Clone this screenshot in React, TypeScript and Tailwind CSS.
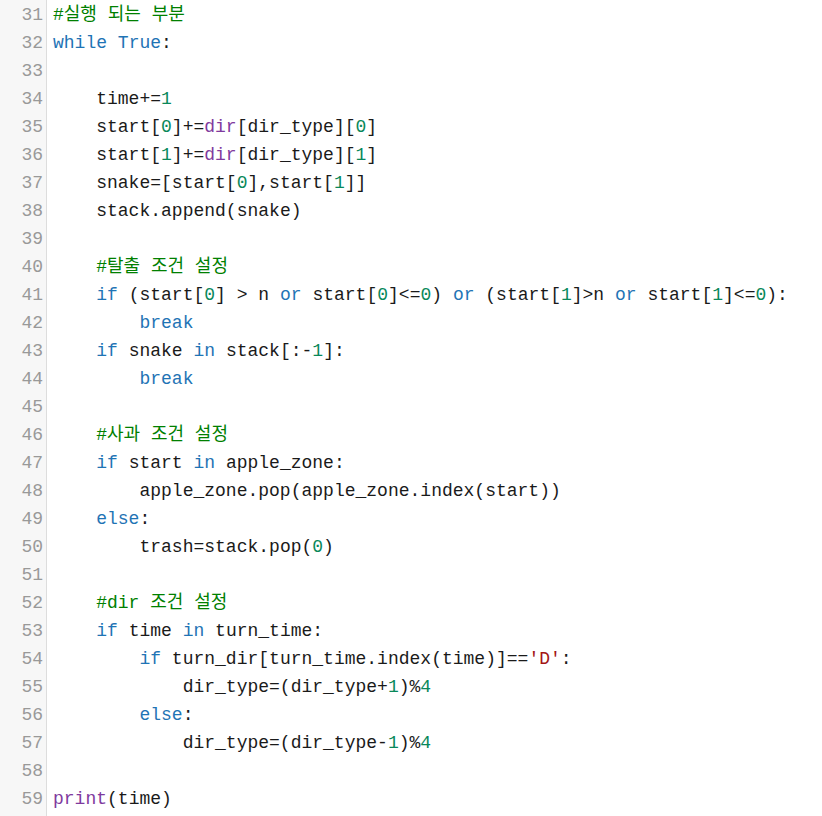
import React from 'react';

const code = [
  '#실행 되는 부분',
  'while True:',
  '',
  '    time+=1',
  '    start[0]+=dir[dir_type][0]',
  '    start[1]+=dir[dir_type][1]',
  '    snake=[start[0],start[1]]',
  '    stack.append(snake)',
  '',
  '    #탈출 조건 설정',
  '    if (start[0] > n or start[0]<=0) or (start[1]>n or start[1]<=0):',
  '        break',
  '    if snake in stack[:-1]:',
  '        break',
  '',
  '    #사과 조건 설정',
  '    if start in apple_zone:',
  '        apple_zone.pop(apple_zone.index(start))',
  '    else:',
  '        trash=stack.pop(0)',
  '',
  '    #dir 조건 설정',
  '    if time in turn_time:',
  "        if turn_dir[turn_time.index(time)]=='D':",
  '            dir_type=(dir_type+1)%4',
  '        else:',
  '            dir_type=(dir_type-1)%4',
  '',
  'print(time)',
];

const keywords = new Set(['while', 'True', 'if', 'or', 'in', 'else', 'break']);
const builtins = new Set(['dir', 'print']);

const tokenClass = {
  comment: 'text-[#008000]',
  string: 'text-[#a31515]',
  number: 'text-[#09885a]',
  keyword: 'text-[#1f74b5]',
  builtin: 'text-[#7f3a9e]',
  plain: 'text-[#1a1a1a]',
};

type Kind = keyof typeof tokenClass;

const tokenize = (line: string) => {
  const out: { text: string; kind: Kind }[] = [];
  const re = /(#.*$)|('[^']*')|(\d+)|([A-Za-z_]\w*)|(\s+|[^\w#'\s]+)/g;
  let m: RegExpExecArray | null;
  while ((m = re.exec(line))) {
    if (m[1]) out.push({ text: m[1], kind: 'comment' });
    else if (m[2]) out.push({ text: m[2], kind: 'string' });
    else if (m[3]) out.push({ text: m[3], kind: 'number' });
    else if (m[4]) {
      const w = m[4];
      out.push({ text: w, kind: keywords.has(w) ? 'keyword' : builtins.has(w) ? 'builtin' : 'plain' });
    } else out.push({ text: m[0], kind: 'plain' });
  }
  return out;
};

const App: React.FC = () => {
  return (
    <div className="w-[822px] h-[816px] bg-white overflow-hidden flex">
      <div className="w-[47px] shrink-0 bg-[#f7f7f7] border-r border-[#dddddd] pt-px">
        {code.map((_, i) => (
          <div
            key={i}
            className="h-[28px] leading-[28px] pr-[3px] text-right text-[#999999] text-[18px] font-['Liberation_Mono','Noto_Sans_CJK_KR',monospace]"
          >
            {31 + i}
          </div>
        ))}
      </div>
      <div className="pl-[6px] pt-px">
        {code.map((line, i) => (
          <div
            key={i}
            className="h-[28px] leading-[28px] whitespace-pre text-[18px] font-['Liberation_Mono','Noto_Sans_CJK_KR',monospace]"
          >
            {tokenize(line).map((t, j) => (
              <span key={j} className={tokenClass[t.kind]}>
                {t.text}
              </span>
            ))}
          </div>
        ))}
      </div>
    </div>
  );
};

export default App;
